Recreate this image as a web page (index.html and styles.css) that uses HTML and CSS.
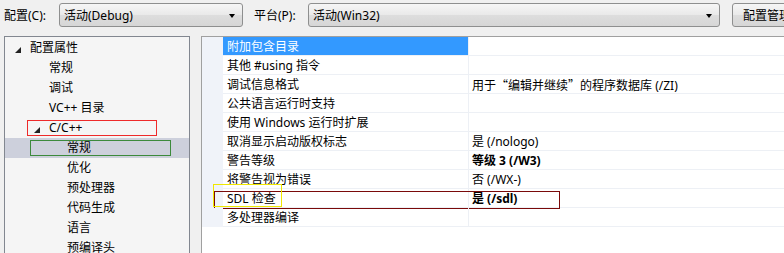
FILE: index.html
```html
<!DOCTYPE html>
<html lang="zh-CN">
<head>
<meta charset="utf-8">
<link rel="stylesheet" href="styles.css">
</head>
<body>
<div class="topbar">
  <label class="lbl lbl-config">配置(C):</label>
  <div class="combo combo-config"><span>活动(Debug)</span><i class="arrow"></i></div>
  <label class="lbl lbl-platform">平台(P):</label>
  <div class="combo combo-platform"><span>活动(Win32)</span><i class="arrow"></i></div>
  <div class="btn">配置管理器(O)...</div>
</div>
<div class="main">
  <div class="tree">
    <div class="node lvl0"><i class="tri"></i>配置属性</div>
    <div class="node lvl1">常规</div>
    <div class="node lvl1">调试</div>
    <div class="node lvl1">VC++ 目录</div>
    <div class="node lvl1b"><i class="tri"></i>C/C++<span class="mark-red"></span></div>
    <div class="node lvl2 sel">常规<span class="mark-green"></span></div>
    <div class="node lvl2">优化</div>
    <div class="node lvl2">预处理器</div>
    <div class="node lvl2">代码生成</div>
    <div class="node lvl2">语言</div>
    <div class="node lvl2">预编译头</div>
  </div>
  <div class="grid-panel">
    <div class="grid">
      <div class="row active"><div class="gut"></div><div class="name">附加包含目录</div><div class="val"></div></div>
      <div class="row"><div class="gut"></div><div class="name">其他 #using 指令</div><div class="val"></div></div>
      <div class="row"><div class="gut"></div><div class="name">调试信息格式</div><div class="val">用于<span class="cjk">“</span>编辑并继续<span class="cjk">”</span>的程序数据库 (/ZI)</div></div>
      <div class="row"><div class="gut"></div><div class="name">公共语言运行时支持</div><div class="val"></div></div>
      <div class="row"><div class="gut"></div><div class="name">使用 Windows 运行时扩展</div><div class="val"></div></div>
      <div class="row"><div class="gut"></div><div class="name">取消显示启动版权标志</div><div class="val">是 (/nologo)</div></div>
      <div class="row"><div class="gut"></div><div class="name">警告等级</div><div class="val bold">等级 3 (/W3)</div></div>
      <div class="row"><div class="gut"></div><div class="name">将警告视为错误</div><div class="val">否 (/WX-)</div></div>
      <div class="row sdl"><div class="gut"></div><div class="name">SDL 检查</div><div class="val bold">是 (/sdl)</div><span class="mark-dark"></span><span class="mark-yellow"></span></div>
      <div class="row"><div class="gut"></div><div class="name">多处理器编译</div><div class="val"></div></div>
    </div>
  </div>
</div>
</body>
</html>
```
FILE: styles.css
```css
html, body {
  margin: 0;
  padding: 0;
  background: #f0f0f0;
  width: 784px;
  height: 253px;
  overflow: hidden;
  font-family: "Noto Sans", "Noto Sans CJK SC", sans-serif;
  font-size: 12px;
  color: #000;
}

.cjk {
  font-family: "Noto Sans CJK SC", sans-serif;
  display: inline-block;
  width: 12px;
  text-align: center;
}

.topbar {
  display: flex;
  align-items: center;
  height: 36px;
  padding-bottom: 6px;
  box-sizing: border-box;
  white-space: nowrap;
}
.topbar > * { flex-shrink: 0; }

.lbl { display: block; }
.lbl-config { margin-left: 4px; width: 55px; }
.lbl-platform { margin-left: 11px; width: 54px; }

.combo, .btn {
  height: 24px;
  box-sizing: border-box;
  border: 1px solid #8e8f8f;
  border-radius: 3px;
  background: linear-gradient(#f6f6f6, #e9e9e9 50%, #dddddd 51%, #d6d6d6);
  display: flex;
  align-items: center;
}
.combo { position: relative; padding-left: 4px; }
.combo-config { width: 184px; }
.combo-platform { width: 412px; }
.arrow {
  position: absolute;
  right: 7px;
  top: 10px;
  width: 0;
  height: 0;
  border-left: 3.5px solid transparent;
  border-right: 3.5px solid transparent;
  border-top: 4px solid #000;
}
.btn {
  margin-left: 12px;
  width: 110px;
  padding-left: 10px;
}

.main {
  display: flex;
  align-items: flex-start;
}

.tree {
  margin-left: 4px;
  width: 186px;
  height: 230px;
  box-sizing: border-box;
  border: 1px solid #828790;
  background: #f5f5f5;
  padding-top: 1px;
  flex-shrink: 0;
}
.node {
  position: relative;
  height: 20px;
  line-height: 20px;
  white-space: nowrap;
}
.lvl0 { padding-left: 25px; }
.lvl1 { padding-left: 44px; }
.lvl1b { padding-left: 44px; }
.lvl2 { padding-left: 62px; }
.sel { background: #cdd0dc; }
.tri {
  position: absolute;
  width: 0;
  height: 0;
  border-left: 6px solid transparent;
  border-bottom: 6px solid #222;
  top: 9px;
}
.lvl0 .tri { left: 10px; }
.lvl1b .tri { left: 29px; }

.mark-red {
  position: absolute;
  left: 22px;
  top: 2px;
  width: 130px;
  height: 16px;
  box-sizing: border-box;
  border: 1px solid #ee2a2a;
}
.mark-green {
  position: absolute;
  left: 25px;
  top: 2px;
  width: 141px;
  height: 16px;
  box-sizing: border-box;
  border: 1px solid #3c8a3c;
}

.grid-panel {
  margin-left: 11px;
  flex: 1;
  height: 230px;
  background: #fff;
  border-left: 1px solid #a0a0a0;
  border-top: 1px solid #a0a0a0;
}
.grid { display: flex; flex-direction: column; }
.row {
  position: relative;
  display: flex;
  height: 19px;
}
.gut {
  width: 21px;
  background: #f0f3f9;
  flex-shrink: 0;
}
.name, .val {
  box-sizing: border-box;
  height: 19px;
  padding-top: 2px;
  line-height: 16px;
  border-bottom: 1px solid #edf0f5;
  white-space: nowrap;
  overflow: hidden;
}
.name {
  width: 246px;
  padding-left: 4px;
  border-right: 1px solid #edf0f5;
  flex-shrink: 0;
}
.val { flex: 1; padding-left: 3px; }
.bold { font-weight: bold; }
.active .name { background: #3399ff; color: #fff; }

.mark-dark {
  position: absolute;
  left: 12px;
  top: 2px;
  width: 346px;
  height: 18px;
  box-sizing: border-box;
  border: 1px solid #7a0a0a;
}
.mark-yellow {
  position: absolute;
  left: 11px;
  top: -5px;
  width: 69px;
  height: 23px;
  box-sizing: border-box;
  border: 1px solid #f0e800;
}
```
